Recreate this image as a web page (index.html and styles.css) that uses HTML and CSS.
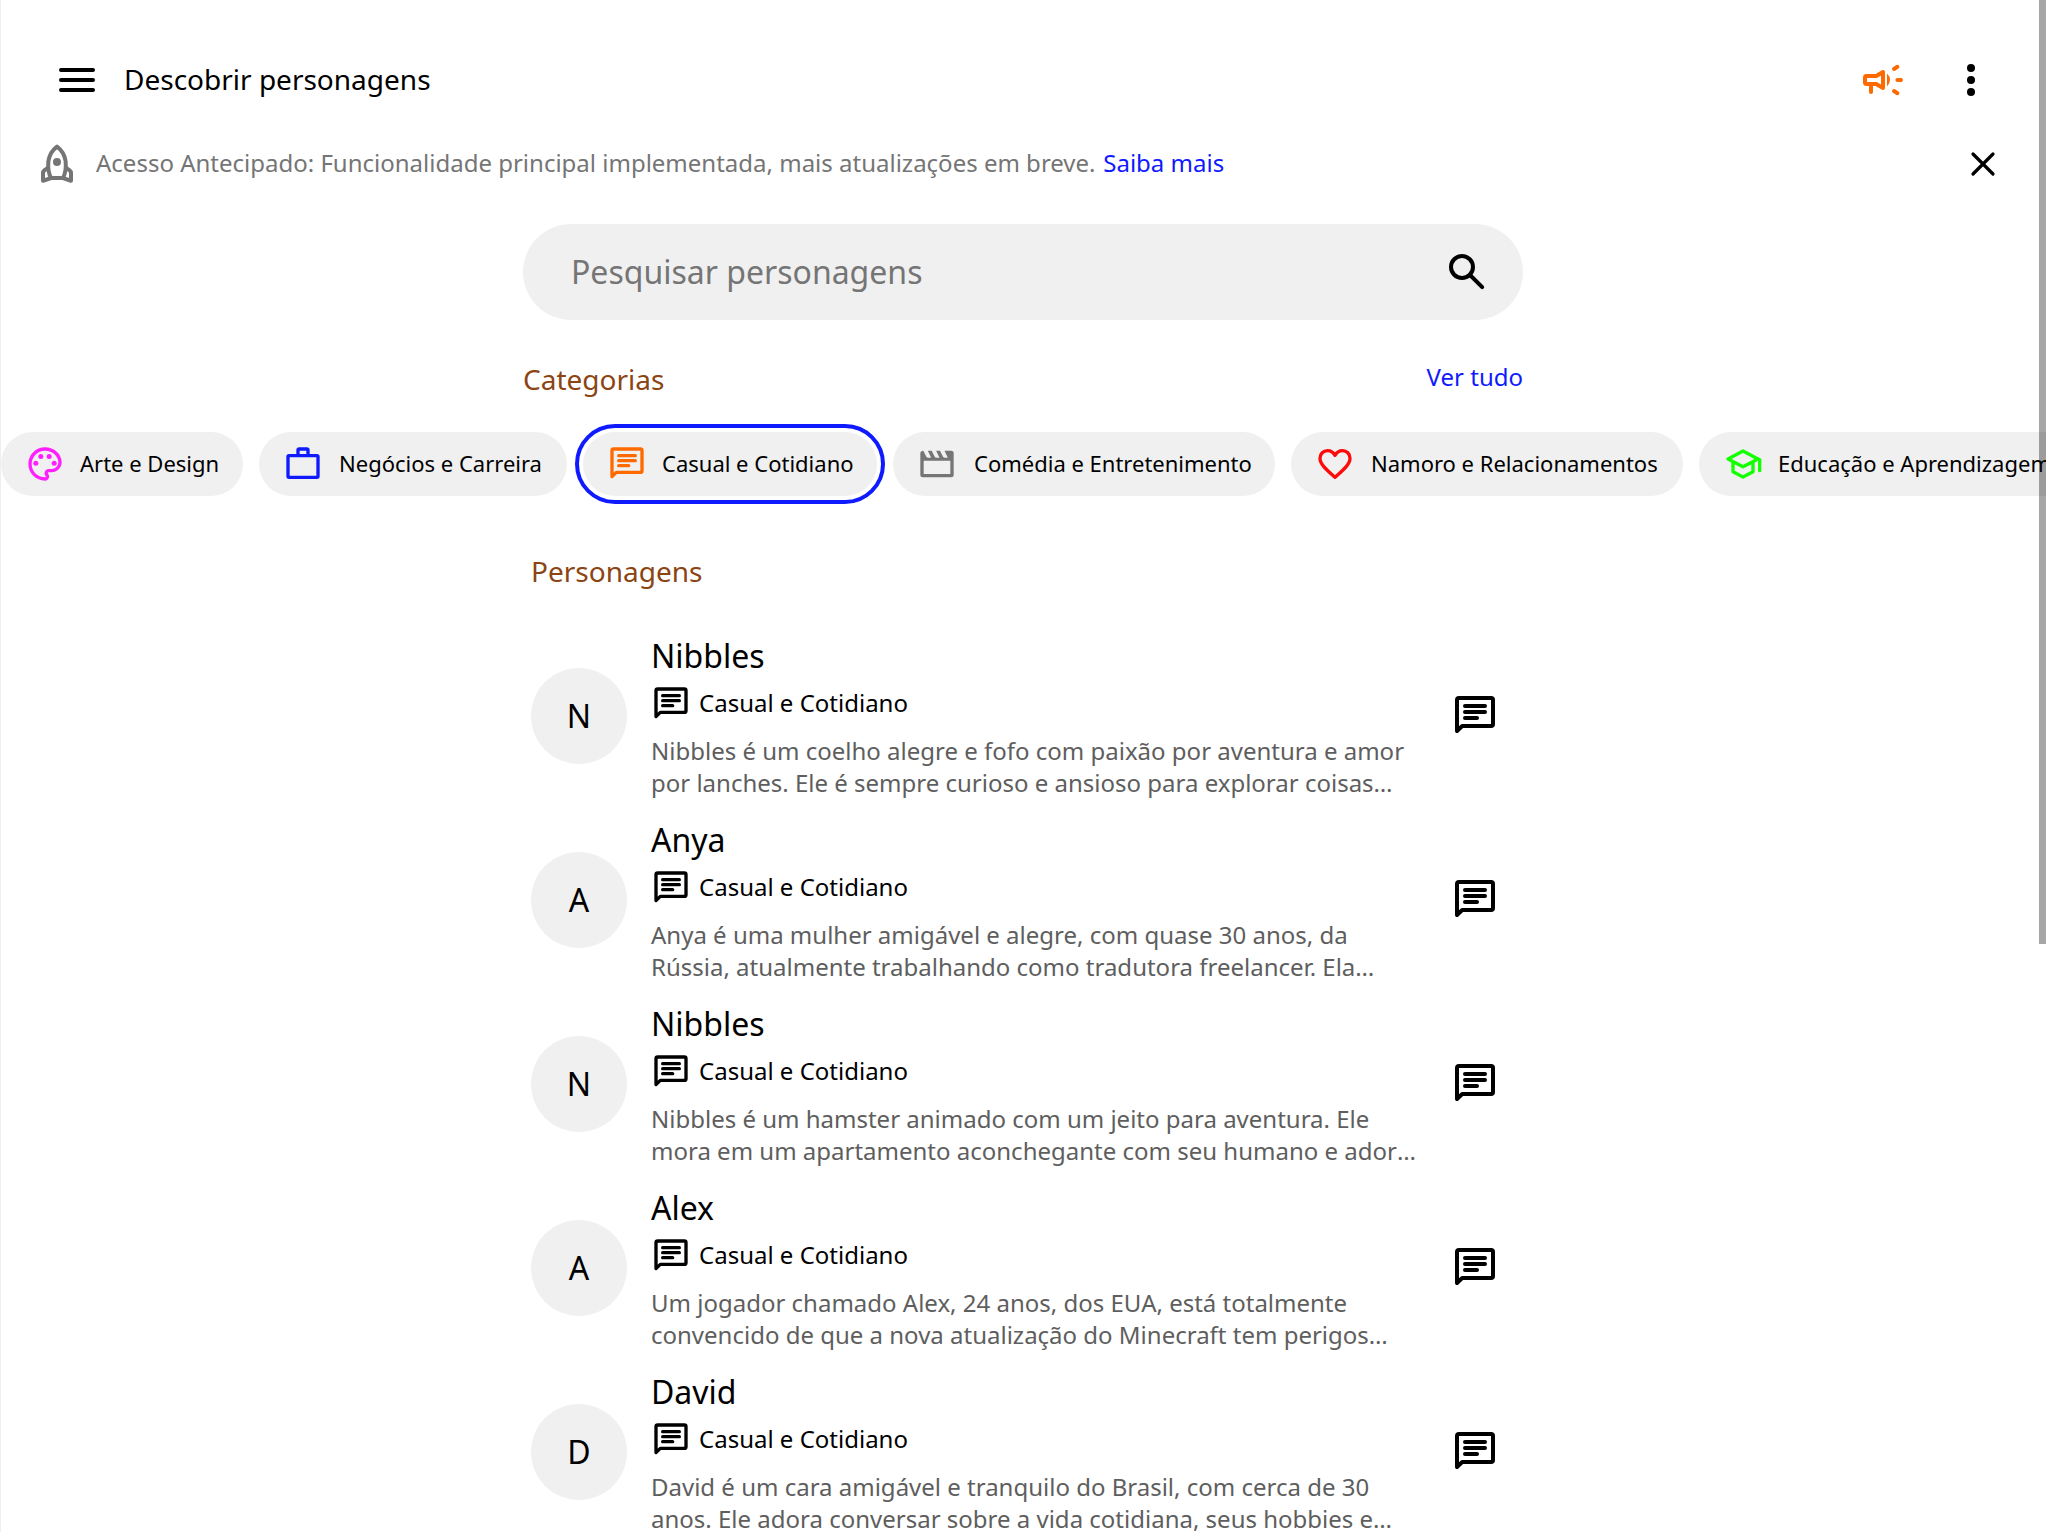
FILE: index.html
```html
<!DOCTYPE html>
<html lang="pt-BR">
<head>
<meta charset="utf-8">
<title>Descobrir personagens</title>
<link rel="stylesheet" href="styles.css">
</head>
<body>
<svg class="defs" aria-hidden="true">
  <symbol id="chat" viewBox="0 0 24 24"><path d="M3 19.500V4Q3 3 4 3H20Q21 3 21 4V16Q21 17 20 17H5.600L3 19.500Z" fill="none" stroke="currentColor" stroke-width="2" stroke-linejoin="round"/><path d="M7 7H17M7 10H17M7 13H13" fill="none" stroke="currentColor" stroke-width="2" stroke-linecap="round"/></symbol>
</svg>
<div class="page">
  <header class="topbar">
    <svg class="icon" viewBox="0 0 24 24"><path d="M4 7H20M4 12H20M4 17H20" fill="none" stroke="currentColor" stroke-width="2" stroke-linecap="round"/></svg>
    <h1 class="title">Descobrir personagens</h1>
    <svg class="icon orange" viewBox="0 0 24 24" fill="none" stroke="currentColor" stroke-width="2" stroke-linecap="round" stroke-linejoin="round"><path d="M3 10.700Q3 10 3.700 10H8.600L12 8V16L8.600 14H3.700Q3 14 3 13.300Z"/><path d="M6 14.500V18"/><path d="M14 8.800Q15.500 10.200 15.500 12T14 15.200Z" fill="currentColor" stroke="none"/><path d="M17.500 6.500L19.200 5.400M19.200 12H21M17.500 17.500L19.200 18.600"/></svg>
    <svg class="icon" viewBox="0 0 24 24"><circle cx="12" cy="6" r="2"/><circle cx="12" cy="12" r="2"/><circle cx="12" cy="18" r="2"/></svg>
  </header>
  <div class="notice">
    <svg class="icon" viewBox="0 0 24 24" fill="none" stroke="currentColor" stroke-width="2" stroke-linejoin="round"><path d="M9 19Q7.2 15.5 7.7 10.5Q8.4 6 12 3.3Q15.6 6 16.3 10.5Q16.8 15.5 15 19Z"/><path d="M7.4 14L5.8 15.1Q5 15.7 5 16.6V20.4L9 19M16.6 14L18.2 15.1Q19 15.7 19 16.6V20.4L15 19"/><circle cx="12" cy="11" r="2" fill="currentColor" stroke="none"/></svg>
    <p class="notice-text">Acesso Antecipado: Funcionalidade principal implementada, mais atualizações em breve. <a class="link">Saiba mais</a></p>
    <svg class="icon close" viewBox="0 0 24 24"><path d="M7 7L17 17M17 7L7 17" fill="none" stroke="currentColor" stroke-width="1.6" stroke-linecap="round"/></svg>
  </div>
  <div class="search">
    <span>Pesquisar personagens</span>
    <svg class="icon" viewBox="0 0 24 24" fill="none" stroke="currentColor" stroke-width="2"><circle cx="9.5" cy="9.5" r="5.5"/><path d="M13.5 13.5L19.6 19.6" stroke-linecap="round"/></svg>
  </div>
  <div class="section-head">
    <h2 class="heading">Categorias</h2>
    <a class="link">Ver tudo</a>
  </div>
  <nav class="chips">
    <div class="chip w1"><svg class="chip-icon magenta" viewBox="0 0 24 24"><path d="M12 22C6.49 22 2 17.510 2 12S6.49 2 12 2s10 4.040 10 9c0 3.310-2.690 6-6 6h-1.770c-.280 0-.500.220-.500.500 0 .120.050.230.130.330.410.470.640 1.060.640 1.670A2.500 2.500 0 0 1 12 22zm0-18c-4.410 0-8 3.590-8 8s3.590 8 8 8c.280 0 .500-.220.500-.500a.540.540 0 0 0-.140-.350c-.410-.460-.630-1.050-.630-1.650a2.500 2.500 0 0 1 2.500-2.500H16c2.210 0 4-1.790 4-4 0-3.860-3.590-7-8-7z"/><circle cx="6.5" cy="11.500" r="1.500"/><circle cx="9.500" cy="7.500" r="1.500"/><circle cx="14.500" cy="7.500" r="1.500"/><circle cx="17.500" cy="11.500" r="1.500"/></svg>Arte e Design</div>
    <div class="chip w2"><svg class="chip-icon blue" viewBox="0 0 24 24" fill="none" stroke="currentColor" stroke-width="2" stroke-linejoin="round"><rect x="3" y="7" width="18" height="13" rx=".6"/><path d="M9 7V3.700Q9 3 9.700 3H14.300Q15 3 15 3.700V7"/></svg>Negócios e Carreira</div>
    <div class="chip w3 selected"><svg class="chip-icon orange"><use href="#chat"/></svg>Casual e Cotidiano</div>
    <div class="chip w4"><svg class="chip-icon gray" viewBox="0 0 24 24"><path d="M3.800 4L5.600 7.600Q6 8.200 6.800 8.200H8.500L6.500 4H8.800L10.600 7.600Q11 8.200 11.800 8.200H13.500L11.500 4H13.800L15.600 7.600Q16 8.200 16.800 8.200H18.500L16.500 4H20.500Q22 4 22 5.500V18.500Q22 20 20.500 20H3.500Q2 20 2 18.500V5.500Q2 4 3.800 4ZM4 10V18H20V10Z" fill-rule="evenodd"/></svg>Comédia e Entretenimento</div>
    <div class="chip w5"><svg class="chip-icon red" viewBox="0 0 24 24"><path d="M12 20C7 15.500 3 12.200 3 8.500C3 5.900 5 4 7.500 4C9.300 4 11 5 12 6.800C13 5 14.700 4 16.500 4C19 4 21 5.900 21 8.500C21 12.200 17 15.500 12 20Z" fill="none" stroke="currentColor" stroke-width="2" stroke-linejoin="round"/></svg>Namoro e Relacionamentos</div>
    <div class="chip w6"><svg class="chip-icon green" viewBox="0 0 24 24" fill="none" stroke="currentColor" stroke-width="2" stroke-linejoin="round" stroke-linecap="round"><path d="M12 4.200L21 9L12 13.700L3 9Z"/><path d="M6 11.500V16.600L12 19.800L18 16.600V11.500M21 9L22 9.500V16"/></svg>Educação e Aprendizagem</div>
  </nav>
  <main class="list">
    <h2 class="heading">Personagens</h2>
    <article class="row"><div class="avatar">N</div><div class="info"><h3 class="name">Nibbles</h3><div class="cat"><svg class="chip-icon"><use href="#chat"/></svg>Casual e Cotidiano</div><p class="desc">Nibbles é um coelho alegre e fofo com paixão por aventura e amor<br>por lanches. Ele é sempre curioso e ansioso para explorar coisas…</p></div><svg class="icon"><use href="#chat"/></svg></article>
    <article class="row"><div class="avatar">A</div><div class="info"><h3 class="name">Anya</h3><div class="cat"><svg class="chip-icon"><use href="#chat"/></svg>Casual e Cotidiano</div><p class="desc">Anya é uma mulher amigável e alegre, com quase 30 anos, da<br>Rússia, atualmente trabalhando como tradutora freelancer. Ela…</p></div><svg class="icon"><use href="#chat"/></svg></article>
    <article class="row"><div class="avatar">N</div><div class="info"><h3 class="name">Nibbles</h3><div class="cat"><svg class="chip-icon"><use href="#chat"/></svg>Casual e Cotidiano</div><p class="desc">Nibbles é um hamster animado com um jeito para aventura. Ele<br>mora em um apartamento aconchegante com seu humano e ador<span class="ellipsis">…</span></p></div><svg class="icon"><use href="#chat"/></svg></article>
    <article class="row"><div class="avatar">A</div><div class="info"><h3 class="name">Alex</h3><div class="cat"><svg class="chip-icon"><use href="#chat"/></svg>Casual e Cotidiano</div><p class="desc">Um jogador chamado Alex, 24 anos, dos EUA, está totalmente<br>convencido de que a nova atualização do Minecraft tem perigos…</p></div><svg class="icon"><use href="#chat"/></svg></article>
    <article class="row"><div class="avatar">D</div><div class="info"><h3 class="name">David</h3><div class="cat"><svg class="chip-icon"><use href="#chat"/></svg>Casual e Cotidiano</div><p class="desc">David é um cara amigável e tranquilo do Brasil, com cerca de 30<br>anos. Ele adora conversar sobre a vida cotidiana, seus hobbies e…</p></div><svg class="icon"><use href="#chat"/></svg></article>
  </main>
  <div class="scrollbar"></div>
</div>
</body>
</html>
```
FILE: styles.css
```css
* { box-sizing: border-box; margin: 0; padding: 0; }
body { background: #fff; color: #000; font-family: "Noto Sans", sans-serif; font-size: 24px; line-height: 32px; overflow: hidden; }
h1, h2, h3 { font-weight: 400; }
svg { fill: currentColor; flex: none; }
svg[fill="none"] { fill: none; }
.defs { display: none; }
.page { position: relative; height: 1532px; overflow: hidden; border-left: 1px solid #efefef; }
.icon { width: 48px; height: 48px; display: block; }
.chip-icon { width: 40px; height: 40px; display: block; }
.orange { color: #ff6a00; }
.magenta { color: #ff1fff; }
.blue, .link { color: #0f1aff; }
.gray { color: #757575; }
.red { color: #ff0a0a; }
.green { color: #14ff00; }
.topbar { display: flex; align-items: center; height: 104px; margin-top: 28px; padding: 0 51px 0 52px; }
.title { flex: 1; margin-left: 23px; padding-bottom: 2px; font-size: 28px; line-height: 40px; }
.topbar .icon + .icon { margin-left: 40px; }
.notice { display: flex; align-items: center; height: 64px; padding: 0 39px 0 32px; color: #757575; }
.notice-text { flex: 1; margin-left: 15px; padding-bottom: 2px; white-space: nowrap; }
.notice .link { margin-left: 1.5px; }
.close { color: #000; }
.search { display: flex; align-items: center; justify-content: space-between; width: 1000px; height: 96px; margin: 28px 0 0 522px; padding: 0 32px 0 48px; border-radius: 48px; background: #f0f0f0; color: #757575; font-size: 32px; }
.search .icon { color: #000; }
.section-head { display: flex; justify-content: space-between; width: 1000px; height: 112px; margin-left: 522px; padding-top: 40px; }
.heading { color: #8b4513; font-size: 28px; line-height: 38px; }
.section-head .link { padding-top: 1px; }
.chips { display: flex; gap: 16px; margin-top: -8px; padding: 8px 0; overflow: hidden; }
.chip { display: flex; flex: none; align-items: center; gap: 15px; height: 64px; padding: 0 0 2px 24px; border-radius: 32px; background: #f0f0f0; font-size: 22px; white-space: nowrap; }
.chip .chip-icon, .cat .chip-icon { margin-top: 2px; }
.w1 { width: 242px; }
.w2 { width: 308px; gap: 16px; }
.w3 { width: 294px; }
.w4 { width: 382px; gap: 17px; }
.w5 { width: 392px; gap: 16px; }
.w6 { width: 400px; }
.selected { outline: 4px solid #0f1aff; outline-offset: 4px; }
.list { width: 988px; margin-left: 530px; padding-top: 48px; }
.list .heading { margin-bottom: 34px; }
.row { display: flex; align-items: center; height: 184px; padding-right: 20px; }
.avatar { display: grid; place-items: center; width: 96px; height: 96px; border-radius: 50%; background: #f0f0f0; font-size: 32px; }
.info { flex: 1; margin-left: 24px; white-space: nowrap; }
.name { font-size: 32px; line-height: 42px; margin-top: 2px; padding-bottom: 2px; }
.cat { display: flex; align-items: center; gap: 8px; height: 48px; }
.desc { margin-top: 8px; color: #5e5e5e; }
.ellipsis { display: inline-block; }
.scrollbar { position: absolute; top: 0; right: 0; width: 7px; height: 944px; background: rgba(0, 0, 0, .35); }
```
